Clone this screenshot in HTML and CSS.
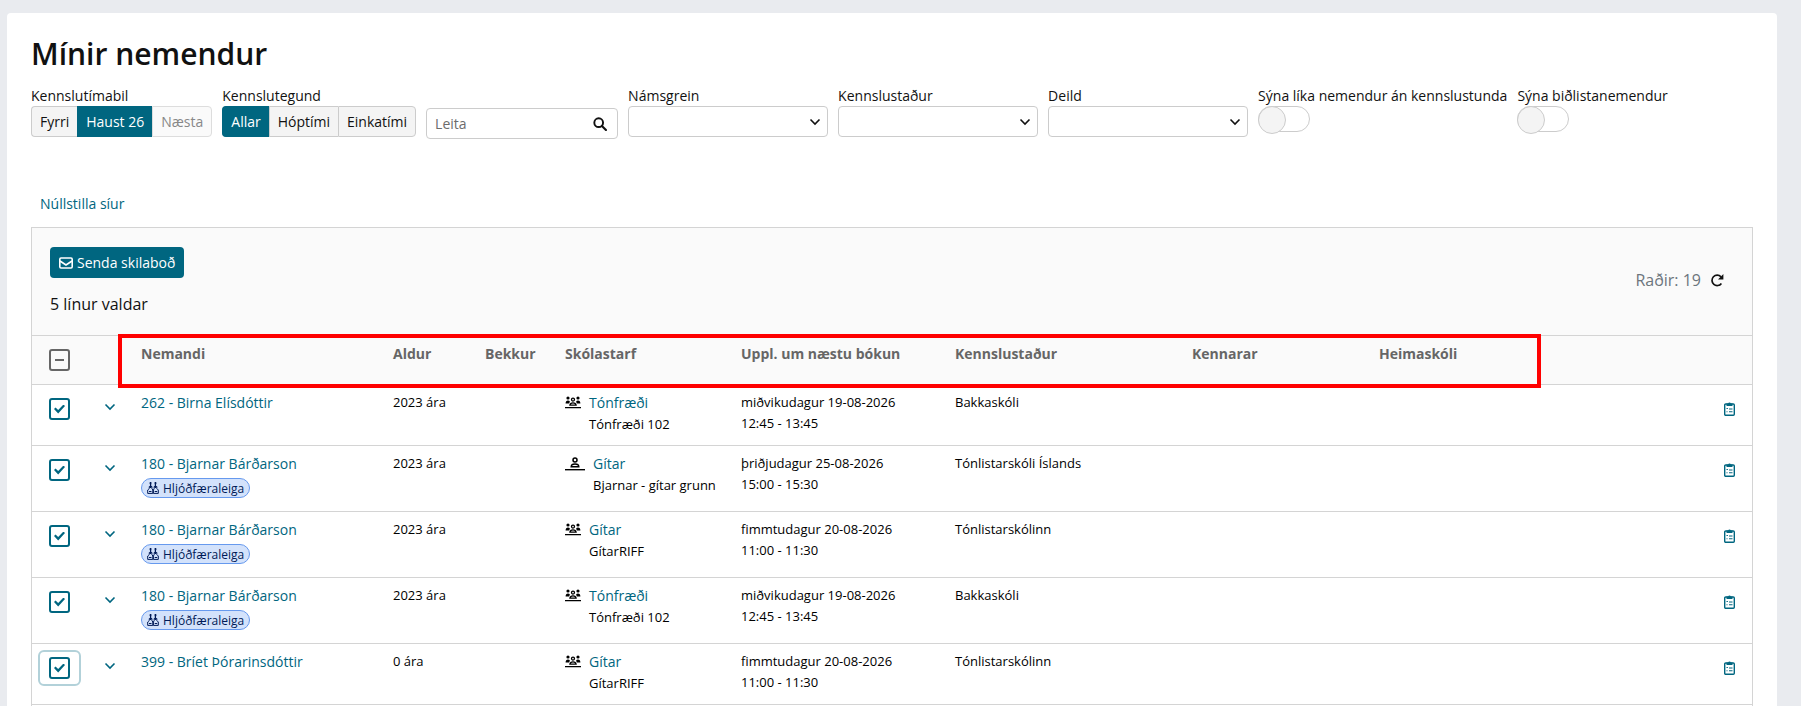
FILE: index.html
```html
<!DOCTYPE html>
<html lang="is">
<head>
    <meta charset="UTF-8">
    <meta name="viewport" content="width=device-width, initial-scale=1.0">
    <title>Mínir nemendur</title>
    <link rel="stylesheet" href="styles.css">
</head>
<body>
    <!-- Shared icons -->
    <svg class="sprite" aria-hidden="true">
        <symbol id="i-search" viewBox="0 0 16 16"><circle cx="6.5" cy="6.5" r="5" fill="none" stroke="currentColor" stroke-width="2.2"/><path d="M10.2 10.2L14.8 14.8" stroke="currentColor" stroke-width="2.4" stroke-linecap="round"/></symbol>
        <symbol id="i-mail" viewBox="0 0 14 12"><rect x=".8" y="1" width="12.4" height="10" rx="1.2" fill="none" stroke="currentColor" stroke-width="1.6"/><path d="M1 4l6 4 6-4" fill="none" stroke="currentColor" stroke-width="1.6"/></symbol>
        <symbol id="i-reload" viewBox="0 0 14 14"><path d="M11.4 10.4A5.2 5.2 0 1 1 11 3.8" fill="none" stroke="currentColor" stroke-width="1.7"/><path d="M13.4 1v5.4H8z" fill="currentColor"/></symbol>
        <symbol id="i-down" viewBox="0 0 12 8"><path d="M1.5 1.5L6 6l4.500-4.500" fill="none" stroke="currentColor" stroke-width="1.6"/></symbol>
        <symbol id="i-group" viewBox="0 0 16 13">
            <g fill="currentColor"><circle cx="3" cy="2" r="1.6"/><circle cx="13" cy="2" r="1.6"/><path d="M.6 7.500C.6 5.500 1.500 4.500 3 4.500c.9 0 1.500.3 1.900 1L4.200 7.500zM15.400 7.500c0-2-.9-3-2.400-3-.9 0-1.500.3-1.900 1l.7 2zM0 11h16v1.300H0z"/></g>
            <circle cx="8" cy="3.600" r="1.500" fill="none" stroke="currentColor" stroke-width="1.300"/><path d="M4.900 9.200c.2-1.700 1.300-2.400 3.100-2.400s2.900.7 3.100 2.400z" fill="none" stroke="currentColor" stroke-width="1.300"/>
        </symbol>
        <symbol id="i-single" viewBox="0 0 20 14">
            <circle cx="10" cy="3" r="2" fill="none" stroke="currentColor" stroke-width="1.500"/><path d="M6.200 9.700C6.300 7.800 7.600 7 10 7s3.700.8 3.800 2.700z" fill="none" stroke="currentColor" stroke-width="1.500"/><path d="M0 12h20v1.400H0z" fill="currentColor"/>
        </symbol>
        <symbol id="i-guitars" viewBox="0 0 12 12">
            <path d="M3.600 0v6M8.400 0v6M2.500 1.200h2M7.500 1.200h2" stroke="currentColor" stroke-width="1.300"/>
            <path d="M2.300 4.500h2.600v2l.9 1.500v3.400H.7V8l1.600-1.500zM7.200 4.500h2.600v2l1.500 1.500v3.400H6.400V8l.8-1.500z" fill="none" stroke="currentColor" stroke-width="1"/><path d="M2 9.500h2.500M7.700 9.500h2.500" stroke="currentColor"/>
        </symbol>
        <symbol id="i-clipboard" viewBox="0 0 11 14">
            <rect x=".7" y="2" width="9.600" height="11.300" rx="1" fill="none" stroke="currentColor" stroke-width="1.400"/>
            <path d="M2.500 1.500h1.600a1.500 1.500 0 0 1 2.800 0h1.600V4h-6z" fill="currentColor"/>
            <path d="M2.500 6.500h1.400M5 7h3.500M2.500 9.800h1M5 9.800h3.500" stroke="currentColor" stroke-width="1.100"/>
        </symbol>
    </svg>

    <main class="card">
        <h1 class="title">Mínir nemendur</h1>

        <form class="filters">
            <div class="filter">
                <span class="filter-label" id="period">Kennslutímabil</span>
                <div class="btn-group" role="group" aria-labelledby="period">
                    <button type="button">Fyrri</button>
                    <button type="button" class="active">Haust 26</button>
                    <button type="button" disabled>Næsta</button>
                </div>
            </div>
            <div class="filter">
                <span class="filter-label" id="kind">Kennslutegund</span>
                <div class="btn-group" role="group" aria-labelledby="kind">
                    <button type="button" class="active">Allar</button>
                    <button type="button">Hóptími</button>
                    <button type="button">Einkatími</button>
                </div>
            </div>
            <div class="search">
                <input type="text" placeholder="Leita" aria-label="Leita">
                <button type="button" aria-label="Leita"><svg width="14" height="14"><use href="#i-search"/></svg></button>
            </div>
            <div class="filter">
                <label class="filter-label" for="subject">Námsgrein</label>
                <div class="select"><select id="subject"><option></option></select><svg width="12" height="8"><use href="#i-down"/></svg></div>
            </div>
            <div class="filter">
                <label class="filter-label" for="place">Kennslustaður</label>
                <div class="select"><select id="place"><option></option></select><svg width="12" height="8"><use href="#i-down"/></svg></div>
            </div>
            <div class="filter">
                <label class="filter-label" for="division">Deild</label>
                <div class="select"><select id="division"><option></option></select><svg width="12" height="8"><use href="#i-down"/></svg></div>
            </div>
            <div class="filter">
                <label class="filter-label" for="no-lessons">Sýna líka nemendur án kennslustunda</label>
                <input class="switch" type="checkbox" id="no-lessons">
            </div>
            <div class="filter">
                <label class="filter-label" for="waiting">Sýna biðlistanemendur</label>
                <input class="switch" type="checkbox" id="waiting">
            </div>
        </form>

        <a class="reset" href="#">Núllstilla síur</a>

        <section class="panel">
            <header class="panel-header">
                <div>
                    <button type="button" class="send"><svg width="14" height="12"><use href="#i-mail"/></svg>Senda skilaboð</button>
                    <p class="selected">5 línur valdar</p>
                </div>
                <div class="count">Raðir: 19 <button type="button" aria-label="Endurhlaða"><svg width="14" height="14"><use href="#i-reload"/></svg></button></div>
            </header>

            <div class="table-wrap">
                <table class="students">
                    <colgroup>
                        <col class="c-check"><col class="c-open"><col class="c-name"><col class="c-age"><col class="c-class"><col class="c-course"><col class="c-next"><col class="c-place"><col class="c-teacher"><col class="c-home"><col>
                    </colgroup>
                    <thead>
                        <tr>
                            <th class="check"><label><input type="checkbox" class="some" aria-label="Velja allt"></label></th>
                            <th></th>
                            <th>Nemandi</th>
                            <th>Aldur</th>
                            <th>Bekkur</th>
                            <th>Skólastarf</th>
                            <th>Uppl. um næstu bókun</th>
                            <th>Kennslustaður</th>
                            <th>Kennarar</th>
                            <th>Heimaskóli</th>
                            <th></th>
                        </tr>
                    </thead>
                    <tbody>
                        <tr>
                            <td class="check"><label><input type="checkbox" checked aria-label="Velja Birna Elísdóttir"></label></td>
                            <td class="open"><button type="button" aria-label="Opna"><svg width="12" height="8"><use href="#i-down"/></svg></button></td>
                            <td class="name"><a href="#">262 - Birna Elísdóttir</a></td>
                            <td>2023 ára</td>
                            <td></td>
                            <td><div class="course"><svg width="16" height="13"><use href="#i-group"/></svg><div><a href="#">Tónfræði</a><span>Tónfræði 102</span></div></div></td>
                            <td>miðvikudagur 19-08-2026<br>12:45 - 13:45</td>
                            <td>Bakkaskóli</td>
                            <td></td>
                            <td></td>
                            <td class="note"><button type="button" aria-label="Skrá"><svg width="11" height="14"><use href="#i-clipboard"/></svg></button></td>
                        </tr>
                        <tr>
                            <td class="check"><label><input type="checkbox" checked aria-label="Velja Bjarnar Bárðarson"></label></td>
                            <td class="open"><button type="button" aria-label="Opna"><svg width="12" height="8"><use href="#i-down"/></svg></button></td>
                            <td class="name"><a href="#">180 - Bjarnar Bárðarson</a><span class="badge"><svg width="12" height="12"><use href="#i-guitars"/></svg>Hljóðfæraleiga</span></td>
                            <td>2023 ára</td>
                            <td></td>
                            <td><div class="course"><svg width="20" height="14"><use href="#i-single"/></svg><div><a href="#">Gítar</a><span>Bjarnar - gítar grunn</span></div></div></td>
                            <td>þriðjudagur 25-08-2026<br>15:00 - 15:30</td>
                            <td>Tónlistarskóli Íslands</td>
                            <td></td>
                            <td></td>
                            <td class="note"><button type="button" aria-label="Skrá"><svg width="11" height="14"><use href="#i-clipboard"/></svg></button></td>
                        </tr>
                        <tr>
                            <td class="check"><label><input type="checkbox" checked aria-label="Velja Bjarnar Bárðarson"></label></td>
                            <td class="open"><button type="button" aria-label="Opna"><svg width="12" height="8"><use href="#i-down"/></svg></button></td>
                            <td class="name"><a href="#">180 - Bjarnar Bárðarson</a><span class="badge"><svg width="12" height="12"><use href="#i-guitars"/></svg>Hljóðfæraleiga</span></td>
                            <td>2023 ára</td>
                            <td></td>
                            <td><div class="course"><svg width="16" height="13"><use href="#i-group"/></svg><div><a href="#">Gítar</a><span>GítarRIFF</span></div></div></td>
                            <td>fimmtudagur 20-08-2026<br>11:00 - 11:30</td>
                            <td>Tónlistarskólinn</td>
                            <td></td>
                            <td></td>
                            <td class="note"><button type="button" aria-label="Skrá"><svg width="11" height="14"><use href="#i-clipboard"/></svg></button></td>
                        </tr>
                        <tr>
                            <td class="check"><label><input type="checkbox" checked aria-label="Velja Bjarnar Bárðarson"></label></td>
                            <td class="open"><button type="button" aria-label="Opna"><svg width="12" height="8"><use href="#i-down"/></svg></button></td>
                            <td class="name"><a href="#">180 - Bjarnar Bárðarson</a><span class="badge"><svg width="12" height="12"><use href="#i-guitars"/></svg>Hljóðfæraleiga</span></td>
                            <td>2023 ára</td>
                            <td></td>
                            <td><div class="course"><svg width="16" height="13"><use href="#i-group"/></svg><div><a href="#">Tónfræði</a><span>Tónfræði 102</span></div></div></td>
                            <td>miðvikudagur 19-08-2026<br>12:45 - 13:45</td>
                            <td>Bakkaskóli</td>
                            <td></td>
                            <td></td>
                            <td class="note"><button type="button" aria-label="Skrá"><svg width="11" height="14"><use href="#i-clipboard"/></svg></button></td>
                        </tr>
                        <tr>
                            <td class="check focused"><label><input type="checkbox" checked aria-label="Velja Bríet Þórarinsdóttir"></label></td>
                            <td class="open"><button type="button" aria-label="Opna"><svg width="12" height="8"><use href="#i-down"/></svg></button></td>
                            <td class="name"><a href="#">399 - Bríet Þórarinsdóttir</a></td>
                            <td>0 ára</td>
                            <td></td>
                            <td><div class="course"><svg width="16" height="13"><use href="#i-group"/></svg><div><a href="#">Gítar</a><span>GítarRIFF</span></div></div></td>
                            <td>fimmtudagur 20-08-2026<br>11:00 - 11:30</td>
                            <td>Tónlistarskólinn</td>
                            <td></td>
                            <td></td>
                            <td class="note"><button type="button" aria-label="Skrá"><svg width="11" height="14"><use href="#i-clipboard"/></svg></button></td>
                        </tr>
                    </tbody>
                </table>
                <div class="highlight"></div>
            </div>
        </section>
    </main>
</body>
</html>
```
FILE: styles.css
```css
* {
    box-sizing: border-box;
}

body {
    margin: 0;
    padding: 13px 24px 0 7px;
    background-color: #e9ebef;
    color: #111111;
    font-family: "Open Sans", "Noto Sans", sans-serif;
    font-size: 14px;
    line-height: 21px;
}

button,
input,
select {
    font: inherit;
    color: inherit;
    margin: 0;
}

svg {
    display: block;
    flex: none;
}

a {
    color: #006680;
    text-decoration: none;
}

.sprite {
    display: none;
}

.card {
    display: flex;
    flex-direction: column;
    min-height: calc(100vh - 13px);
    padding: 23px 24px 0;
    background-color: #ffffff;
    border-radius: 4px 4px 0 0;
}

.title {
    margin: 0 0 13px;
    font-size: 30px;
    line-height: 36px;
    font-weight: 600;
}

/* Filters */
.filters {
    display: flex;
    align-items: flex-start;
    gap: 10px;
}

.filter-label {
    display: block;
    white-space: nowrap;
}

.btn-group {
    display: flex;
}

.btn-group button {
    height: 31px;
    padding: 0 8px;
    border: 1px solid #cccccc;
    background-color: #f4f4f4;
    white-space: nowrap;
}

.btn-group button:not(:last-child) {
    border-right: none;
}

.btn-group button:first-child {
    border-radius: 4px 0 0 4px;
}

.btn-group button:last-child {
    border-radius: 0 4px 4px 0;
}

.btn-group .active {
    background-color: #006680;
    border-color: #006680;
    color: #ffffff;
    font-weight: 500;
}

.btn-group button:disabled {
    background-color: #fafafa;
    border-color: #dddddd;
    color: #888888;
}

.search {
    display: flex;
    align-items: center;
    width: 192px;
    height: 31px;
    margin-top: 23px;
    border: 1px solid #cccccc;
    border-radius: 4px;
}

.search input {
    flex: 1;
    min-width: 0;
    padding: 0 8px;
    border: none;
    background: none;
}

.search input::placeholder {
    color: #6c6c6c;
}

.search button {
    padding: 0 10px;
    border: none;
    background: none;
}

.select {
    display: grid;
    align-items: center;
    width: 200px;
}

.select > * {
    grid-area: 1 / 1;
}

.select select {
    appearance: none;
    width: 100%;
    height: 31px;
    border: 1px solid #cccccc;
    border-radius: 4px;
    background-color: #ffffff;
}

.select svg {
    justify-self: end;
    margin-right: 7px;
    pointer-events: none;
}

.switch {
    appearance: none;
    display: flex;
    width: 52px;
    height: 26px;
    border: 1px solid #cccccc;
    border-radius: 13px;
}

.switch::before {
    content: "";
    width: 26px;
    height: 26px;
    margin: -1px;
    border: 1px solid #cccccc;
    border-radius: 50%;
    background-color: #f4f4f4;
}

.reset {
    align-self: flex-start;
    margin: 49px 0 8px;
    padding: 5px 9px;
}

/* Panel above the table */
.panel {
    flex: 1;
    border: 1px solid #d4d4d4;
    border-bottom: none;
}

.panel-header {
    display: flex;
    justify-content: space-between;
    align-items: center;
    padding: 19px 28px 19px 18px;
    background-color: #fafafa;
}

.send {
    display: flex;
    align-items: center;
    gap: 4px;
    height: 31px;
    padding: 0 9px;
    border: none;
    border-radius: 4px;
    background-color: #006680;
    color: #ffffff;
    font-weight: 500;
}

.selected {
    margin: 14px 0 0;
    font-size: 16px;
    line-height: 24px;
}

.count {
    display: flex;
    align-items: center;
    gap: 9px;
    margin-bottom: 4px;
    color: #6c757d;
    font-size: 16px;
    line-height: 24px;
}

.count button {
    padding: 0;
    border: none;
    background: none;
    color: #111111;
}

/* Table */
.table-wrap {
    position: relative;
}

.students {
    width: 100%;
    table-layout: fixed;
    border-collapse: separate;
    border-spacing: 0;
    color: #000000;
    font-size: 13px;
}

.c-check { width: 64px; }
.c-open { width: 37px; }
.c-name { width: 252px; }
.c-age { width: 92px; }
.c-class { width: 80px; }
.c-course { width: 176px; }
.c-next { width: 214px; }
.c-place { width: 237px; }
.c-teacher { width: 187px; }
.c-home { width: 162px; }

.students th,
.students td {
    padding: 7px 8px 10px;
    border-bottom: 1px solid #d4d4d4;
    text-align: left;
    vertical-align: top;
}

.students th {
    border-top: 1px solid #d4d4d4;
    background-color: #fafafa;
    color: #666666;
    font-size: 14px;
    font-weight: 700;
    white-space: nowrap;
}

.students .check {
    padding: 6px 0 6px 6px;
}

.check label {
    display: flex;
    align-items: center;
    justify-content: center;
    width: 43px;
    height: 36px;
    border: 2px solid transparent;
    border-radius: 6px;
}

.focused label {
    border-color: #b2d1d9;
}

.check input {
    appearance: none;
    display: flex;
    align-items: center;
    justify-content: center;
    width: 21px;
    height: 22px;
    border: 2px solid #006680;
    border-radius: 3px;
}

.check input:checked::before {
    content: "";
    width: 11px;
    height: 9px;
    background-color: #006680;
    clip-path: polygon(0 50%, 14% 34%, 38% 62%, 86% 0, 100% 16%, 38% 100%);
}

.check .some {
    border-color: #666666;
}

.check .some::before {
    content: "";
    width: 9px;
    height: 2px;
    background-color: #666666;
}

.students button {
    display: block;
    padding: 0;
    border: none;
    background: none;
    color: #006680;
}

.students .open {
    padding-top: 18px;
}

.students .note {
    padding: 17px 17px 0 0;
}

.note button {
    margin-left: auto;
}

.students a {
    display: block;
    font-size: 14px;
}

.badge {
    display: flex;
    align-items: center;
    gap: 4px;
    width: fit-content;
    height: 20px;
    margin: 4px 0 3px;
    padding: 0 5px;
    border: 1px solid #6699ee;
    border-radius: 10px;
    background-color: #d3e2fb;
    color: #001a57;
    font-size: 12px;
}

.course {
    display: flex;
    gap: 8px;
}

.course svg {
    margin-top: 4px;
}

.course span {
    display: block;
}

.students .course a {
    line-height: 22px;
}

/* Red frame round the column headings */
.highlight {
    position: absolute;
    top: -1px;
    left: 86px;
    width: 1423px;
    height: 54px;
    border: 4px solid #ff0000;
    pointer-events: none;
}
```
